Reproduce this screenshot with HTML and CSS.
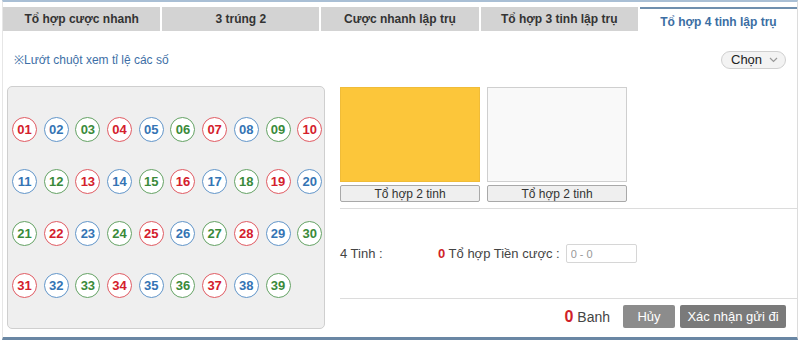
FILE: index.html
```html
<!DOCTYPE html>
<html lang="vi">
<head>
  <meta charset="UTF-8">
  <title>Tổ hợp 4 tinh lập trụ</title>
  <link rel="stylesheet" href="styles.css">
</head>
<body>

<div class="frame">
  <nav class="tabs">
    <div class="tab">Tổ hợp cược nhanh</div>
    <div class="tab">3 trúng 2</div>
    <div class="tab">Cược nhanh lập trụ</div>
    <div class="tab">Tổ hợp 3 tinh lập trụ</div>
    <div class="tab active">Tổ hợp 4 tinh lập trụ</div>
  </nav>

  <div class="toolbar">
    <span class="hint">※Lướt chuột xem tỉ lệ các số</span>
    <div class="select">
      Chọn
      <svg width="9" height="6" viewBox="0 0 9 6"><path d="M1 1 L4.5 4.5 L8 1" fill="none" stroke="#999" stroke-width="1.2"/></svg>
    </div>
  </div>

  <div class="main">
    <div class="balls-panel">
      <div class="balls" id="balls"></div>
    </div>

    <div class="side">
      <div class="cards">
        <div class="card">
          <div class="card-box yellow"></div>
          <button class="card-btn">Tổ hợp 2 tinh</button>
        </div>
        <div class="card">
          <div class="card-box"></div>
          <button class="card-btn">Tổ hợp 2 tinh</button>
        </div>
      </div>

      <div class="summary">
        <span class="label">4 Tinh :</span>
        <span class="count"><b class="red">0</b> Tổ hợp Tiền cược :</span>
        <input class="amount" type="text" placeholder="0 - 0">
      </div>

      <div class="actions">
        <span class="total"><b class="red big">0</b> Banh</span>
        <button class="btn cancel">Hủy</button>
        <button class="btn submit">Xác nhận gửi đi</button>
      </div>
    </div>
  </div>
</div>

<script>
  // Vẽ các số 01 - 39
  const colors = ["red", "blue", "green"];
  const box = document.getElementById("balls");
  for (let n = 1; n <= 39; n++) {
    const ball = document.createElement("span");
    ball.className = "ball " + colors[(n - 1) % 3];
    ball.textContent = String(n).padStart(2, "0");
    box.appendChild(ball);
  }
</script>

</body>
</html>
```

FILE: styles.css
```css
body {
  margin: 0;
  font-family: "Liberation Sans", Arial, sans-serif;
  color: #333;
  background: #ffffff;
}

.frame {
  width: 796px;
  height: 340px;
  margin: 0 2px;
  border-top: 2px solid #a9bfd5;
  border-bottom: 3px solid #6a87a4;
  border-left: 1px solid #e6e6e6;
  border-right: 1px solid #dcdcdc;
  box-sizing: border-box;
}

.tabs {
  display: flex;
  gap: 2px;
  padding-top: 5px;
}

.tab {
  flex: 1;
  height: 24px;
  line-height: 24px;
  background-color: #d3d3d3;
  text-align: center;
  font-size: 12px;
  font-weight: bold;
  color: #333;
}

.tab.active {
  background-color: #ffffff;
  border-top: 2px solid #6f8fae;
  color: #3b6ea3;
  line-height: 26px;
}

.toolbar {
  height: 55px;
  display: flex;
  align-items: center;
  justify-content: space-between;
  padding: 0 11px 2px 11px;
  box-sizing: border-box;
}

.hint {
  font-size: 12px;
  color: #3d6fa6;
}

.select {
  width: 65px;
  height: 18px;
  box-sizing: border-box;
  border: 1px solid #d0d0d0;
  border-radius: 9px;
  background-color: #f3f3f3;
  font-size: 13px;
  color: #222;
  display: flex;
  align-items: center;
  justify-content: space-between;
  padding: 0 7px 0 9px;
}

.main {
  display: flex;
  gap: 15px;
  padding-left: 4px;
  margin-top: -2px;
}

.balls-panel {
  width: 318px;
  height: 243px;
  box-sizing: border-box;
  background-color: #efefef;
  border: 1px solid #cfcfcf;
  border-radius: 5px;
  padding: 30px 0 0 4px;
}

.balls {
  display: grid;
  grid-template-columns: repeat(10, 25px);
  column-gap: 6.7px;
  row-gap: 27px;
}

.ball {
  width: 25px;
  height: 25px;
  box-sizing: border-box;
  border-radius: 50%;
  background-color: #ffffff;
  border: 1px solid;
  font-size: 13px;
  font-weight: bold;
  text-align: center;
  line-height: 23px;
}

.ball.red { color: #d4202c; border-color: #e05a62; }
.ball.blue { color: #3474b4; border-color: #6195c9; }
.ball.green { color: #3a8a3a; border-color: #64a264; }

.side {
  flex: 1;
  display: flex;
  flex-direction: column;
}

.cards {
  display: flex;
  gap: 7px;
  padding: 1px 0 6px;
  border-bottom: 1px solid #dcdcdc;
}

.card {
  width: 140px;
  display: flex;
  flex-direction: column;
  gap: 3px;
}

.card-box {
  height: 95px;
  box-sizing: border-box;
  border: 1px solid #cfcfcf;
  background-color: #f9f9f9;
}

.card-box.yellow {
  background-color: #fcc63a;
  border-color: #f0bc38;
}

.card-btn {
  height: 17px;
  padding: 0;
  border: 1px solid #a9a9a9;
  border-radius: 2px;
  background-color: #efefef;
  font-family: inherit;
  font-size: 12px;
  color: #333;
}

.summary {
  height: 89px;
  display: flex;
  align-items: center;
  font-size: 13px;
  color: #444;
  border-bottom: 1px solid #dcdcdc;
}

.label {
  width: 98px;
}

.count {
  margin-right: 6px;
}

.red {
  color: #d01f2a;
}

.big {
  font-size: 16px;
}

.amount {
  width: 71px;
  height: 19px;
  box-sizing: border-box;
  border: 1px solid #d6d6d6;
  border-radius: 2px;
  padding: 0 4px;
  font-family: inherit;
  font-size: 11px;
}

.amount::placeholder {
  color: #999;
}

.actions {
  display: flex;
  justify-content: flex-end;
  align-items: center;
  gap: 5px;
  padding: 6px 11px 0 0;
}

.total {
  font-size: 14px;
  color: #444;
  margin-right: 8px;
}

.btn {
  height: 23px;
  border: none;
  border-radius: 2px;
  color: #ffffff;
  font-family: inherit;
  font-size: 13px;
  padding: 0;
  white-space: nowrap;
}

.cancel {
  width: 52px;
  background-color: #8c8c8c;
}

.submit {
  width: 106px;
  background-color: #7a7a7a;
}
```
